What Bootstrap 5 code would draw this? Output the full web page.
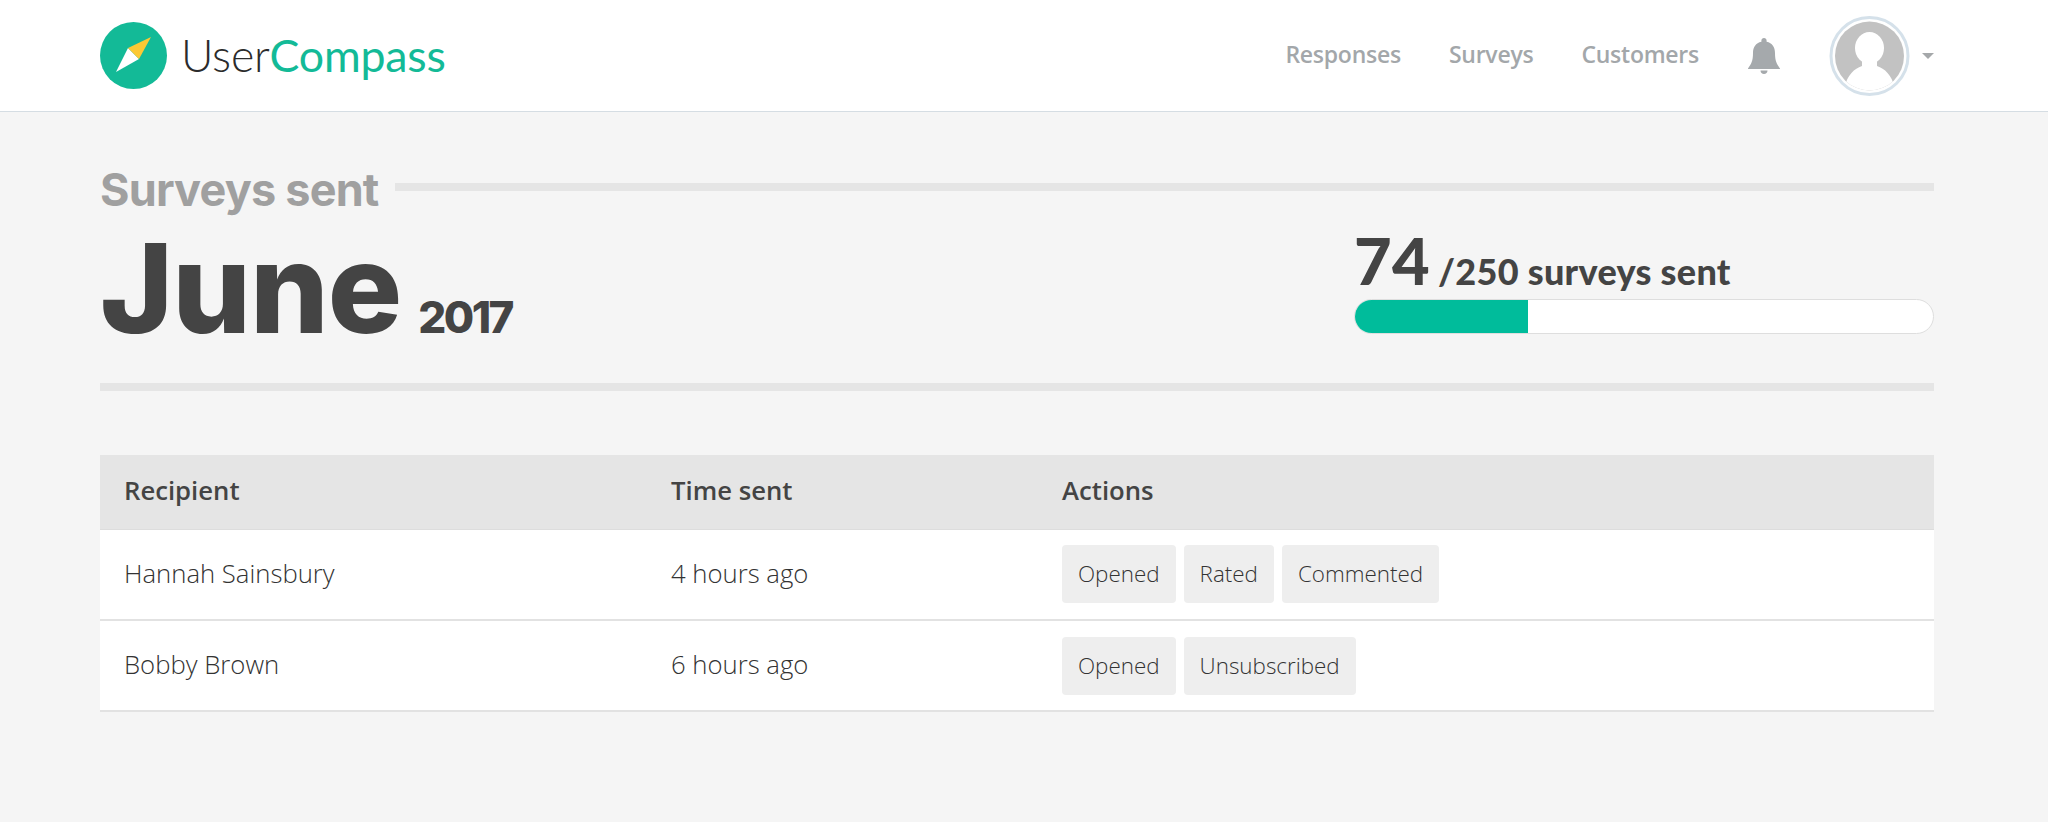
<!DOCTYPE html>
<html lang="en">
<head>
<meta charset="utf-8">
<title>UserCompass</title>
<link href="https://cdn.jsdelivr.net/npm/bootstrap@5.3.0/dist/css/bootstrap.min.css" rel="stylesheet">
<style>
body { background: #f5f5f5; font-family: "Open Sans", sans-serif; color: #444; min-height: 822px; }
.top-bar { background: #fff; height: 112px; padding: 0 114px 0 100px; border-bottom: 1px solid #d5dde3; flex-wrap: nowrap; }
.brand-link { padding: 0; margin: 0; gap: 14px; font-family: Lato, sans-serif; font-weight: 300; font-size: 44.7px; line-height: 1; color: #2b2b2b; letter-spacing: -0.2px; }
.brand-link:hover { color: #2b2b2b; }
.brand-accent { color: #13ba97; font-weight: 400; }
.top-link { color: #a3a7aa; font-weight: 600; font-size: 23px; padding: 0; text-decoration: none; letter-spacing: -0.25px; }
.top-links { gap: 48px; margin-top: -2px; margin-right: 1px; }
.user-menu { gap: 12px; margin-left: 49px; }
.drop-mark { width: 0; height: 0; border-left: 6px solid transparent; border-right: 6px solid transparent; border-top: 6px solid #a5a8aa; }
.page-body { padding: 56px 114px 0 100px; }
.kicker-row { gap: 16px; height: 58px; }
.kicker { font-family: Inter, sans-serif; font-weight: 700; font-size: 45px; line-height: 44px; color: #a0a0a0; margin: 0; letter-spacing: -0.8px; white-space: nowrap; }
.thin-rule { height: 8px; background: #e5e5e5; }
.kicker-line { margin-top: 15px; }
.hero-row { height: 157px; }
.month { font-family: Inter, sans-serif; font-weight: 800; font-size: 124px; line-height: 1; color: #444; margin: 0; letter-spacing: -1px; }
.year { font-family: Inter, sans-serif; font-weight: 800; font-size: 44px; letter-spacing: -2.5px; margin-left: 17px; }
.quota { width: 580px; margin-top: 2px; }
.quota-text { font-family: Lato, sans-serif; font-weight: 900; color: #444; font-size: 36px; line-height: 1; letter-spacing: .3px; }
.quota-count { font-size: 65px; margin-right: 8px; }
.quota-bar { height: 35px; border: 1px solid #dedede; border-radius: 18px; background: #fff; margin-top: 6px; }
.quota-bar .progress-bar { background: #00bc9b; }
.log-table { margin: 64px 0 0; font-size: 25.7px; --bs-table-bg: #fff; table-layout: fixed; width: 100%; color: #333; }
.log-table th { background: #e5e5e5; font-weight: 600; height: 74px; padding: 0 24px; border-bottom: 1px solid #ddd; vertical-align: middle; color: #444; }
.log-table td { height: 91px; padding: 0 24px; border-bottom: 2px solid #e2e2e2; vertical-align: middle; font-weight: 300; color: #333; }
.chip { background: #eee; color: #333; font-weight: 300; font-size: 22.4px; line-height: 58px; height: 58px; padding: 0 16px; border-radius: 4px; }
.chips { gap: 8px; }
</style>
</head>
<body>
<nav class="navbar top-bar d-flex justify-content-between align-items-center">
  <a class="navbar-brand brand-link d-flex align-items-center" href="#">
    <svg width="67" height="67" viewBox="0 0 67 67" aria-hidden="true">
      <circle cx="33.5" cy="33.5" r="33.5" fill="#13ba97"/>
      <polygon points="16,50 28,26 39,37" fill="#fff"/>
      <polygon points="51,15 28,26 39,37" fill="#fcc934"/>
    </svg>
    <span>User<span class="brand-accent">Compass</span></span>
  </a>
  <div class="d-flex align-items-center">
    <div class="navbar-nav flex-row top-links">
      <a class="nav-link top-link" href="#">Responses</a>
      <a class="nav-link top-link" href="#">Surveys</a>
      <a class="nav-link top-link" href="#">Customers</a>
    </div>
    <svg class="ms-5" width="32" height="36" viewBox="0 0 32 36" aria-hidden="true">
      <path fill="#a5a9ac" d="M16 0c1.5 0 2.6 1.1 2.6 2.6v1.2C24.300 5 27 9.500 27 15c0 8 1.700 11 5 15.500V31H0v-.5C3.300 26 5 23 5 15 5 9.500 7.700 5 13.400 3.800V2.600C13.400 1.100 14.500 0 16 0zM12.500 32.500h7C19.500 34.600 18 36 16 36s-3.500-1.400-3.500-3.500z"/>
    </svg>
    <div class="d-flex align-items-center user-menu">
      <svg width="81" height="80" viewBox="0 0 81 80" aria-hidden="true">
        <defs><clipPath id="faceclip"><circle cx="40.500" cy="40" r="34.500"/></clipPath></defs>
        <circle cx="40.500" cy="40" r="38.500" fill="#fff" stroke="#d5e1ea" stroke-width="3"/>
        <circle cx="40.500" cy="40" r="34.500" fill="#c2c2c2"/>
        <g clip-path="url(#faceclip)" fill="#fff">
          <ellipse cx="40.500" cy="32" rx="14.500" ry="16"/>
          <path d="M33 44h15v6c8 3 14 8 18 22v10H15V72c4-14 10-19 18-22z"/>
        </g>
      </svg>
      <span class="drop-mark"></span>
    </div>
  </div>
</nav>

<main class="page-body">
  <div class="d-flex kicker-row align-items-start">
    <h2 class="kicker">Surveys sent</h2>
    <div class="thin-rule flex-grow-1 kicker-line"></div>
  </div>
  <div class="d-flex justify-content-between align-items-start hero-row">
    <h1 class="month">June<span class="year">2017</span></h1>
    <div class="quota">
      <div class="quota-text"><span class="quota-count">74</span>/250 surveys sent</div>
      <div class="progress quota-bar" role="progressbar" aria-label="Surveys sent" aria-valuenow="74" aria-valuemin="0" aria-valuemax="250">
        <div class="progress-bar" style="width:30%"></div>
      </div>
    </div>
  </div>
  <div class="thin-rule"></div>

  <table class="table log-table">
    <colgroup><col style="width:547px"><col style="width:391px"><col></colgroup>
    <thead>
      <tr><th>Recipient</th><th>Time sent</th><th>Actions</th></tr>
    </thead>
    <tbody>
      <tr>
        <td>Hannah Sainsbury</td>
        <td>4 hours ago</td>
        <td><div class="d-flex chips"><span class="chip">Opened</span><span class="chip">Rated</span><span class="chip">Commented</span></div></td>
      </tr>
      <tr>
        <td>Bobby Brown</td>
        <td>6 hours ago</td>
        <td><div class="d-flex chips"><span class="chip">Opened</span><span class="chip">Unsubscribed</span></div></td>
      </tr>
    </tbody>
  </table>
</main>
<script src="https://cdn.jsdelivr.net/npm/bootstrap@5.3.0/dist/js/bootstrap.bundle.min.js"></script>
</body>
</html>
